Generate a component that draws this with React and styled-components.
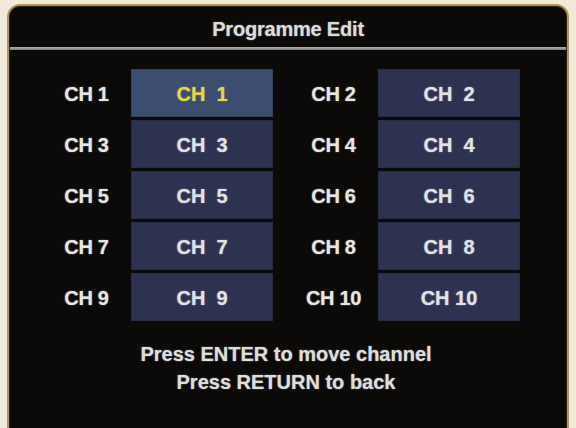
import React from "react";
import styled, { createGlobalStyle } from "styled-components";

const GlobalStyle = createGlobalStyle`
  html, body {
    margin: 0;
    padding: 0;
    background: #f1ead8;
    overflow: hidden;
  }
  * { box-sizing: border-box; }
`;

const Screen = styled.div`
  width: 576px;
  height: 428px;
  padding: 4px 7px 0 7px;
  font-family: "Liberation Sans", Arial, sans-serif;
  font-weight: bold;
`;

const Frame = styled.div`
  height: 430px;
  border: 2px solid #b0925a;
  border-bottom: none;
  border-radius: 13px 13px 0 0;
  background: #0b0a09;
  display: flex;
  flex-direction: column;
  box-shadow: inset 0 0 0 1px #2a2214;
`;

const Header = styled.div`
  height: 41px;
  padding-top: 5px;
  display: flex;
  align-items: center;
  justify-content: center;
  color: #dcdcdc;
  font-size: 20px;
  letter-spacing: -0.2px;
  text-shadow: 0 0 1.5px rgba(255, 255, 255, 0.55);
`;

const Divider = styled.div`
  height: 3px;
  margin: 0 1px;
  background: linear-gradient(#b4b4b4, #7a7a7a);
`;

const Grid = styled.div`
  margin-top: 19px;
  padding-left: 33px;
  display: grid;
  grid-template-columns: repeat(2, 231px);
  column-gap: 16px;
  row-gap: 3px;
`;

const Pair = styled.div`
  display: grid;
  grid-template-columns: 89px 142px;
  height: 48px;
`;

const Label = styled.div`
  display: flex;
  align-items: center;
  justify-content: center;
  padding-top: 3px;
  color: #e6e6e6;
  font-size: 20px;
  letter-spacing: -0.3px;
  text-shadow: 0 0 1.5px rgba(255, 255, 255, 0.55);
`;

const ChannelButton = styled.div`
  display: flex;
  align-items: center;
  justify-content: center;
  padding-top: 3px;
  white-space: pre;
  font-size: 20px;
  background: ${(p) => (p.$active ? "#3c4d70" : "#2d3250")};
  color: ${(p) => (p.$active ? "#e4d84a" : "#e2e2e6")};
  box-shadow: inset 0 0 0 1px ${(p) => (p.$active ? "#34445f" : "#272b44")};
  text-shadow: 0 0 1.5px
    ${(p) => (p.$active ? "rgba(240,230,80,0.55)" : "rgba(255,255,255,0.55)")};
`;

const Footer = styled.div`
  margin-top: 19px;
  display: flex;
  flex-direction: column;
  align-items: center;
  color: #dedede;
  font-size: 20px;
  line-height: 28px;
  text-shadow: 0 0 1.5px rgba(255, 255, 255, 0.55);
  padding-right: 4px;
`;

const channels = Array.from({ length: 10 }, (_, i) => i + 1);

export default function App() {
  return (
    <>
      <GlobalStyle />
      <Screen>
        <Frame>
          <Header>Programme Edit</Header>
          <Divider />
          <Grid>
            {channels.map((n) => (
              <Pair key={n}>
                <Label>{`CH ${n}`}</Label>
                <ChannelButton $active={n === 1}>
                  {n < 10 ? `CH  ${n}` : `CH ${n}`}
                </ChannelButton>
              </Pair>
            ))}
          </Grid>
          <Footer>
            <div>Press ENTER to move channel</div>
            <div>Press RETURN to back</div>
          </Footer>
        </Frame>
      </Screen>
    </>
  );
}
